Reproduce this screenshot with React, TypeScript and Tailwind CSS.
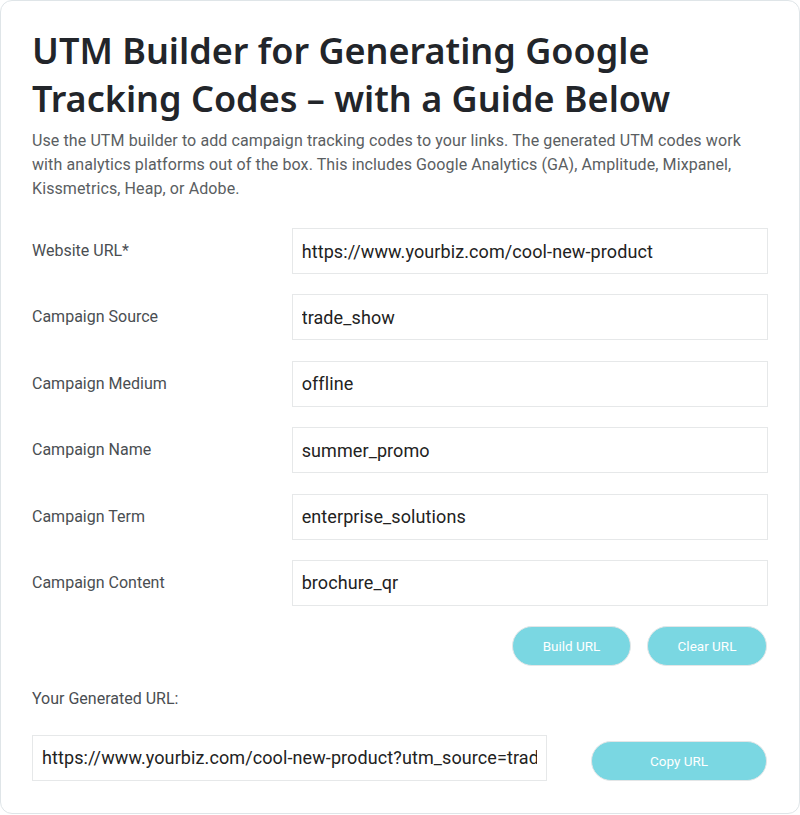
const fields = [
  { label: "Website URL*", value: "https://www.yourbiz.com/cool-new-product" },
  { label: "Campaign Source", value: "trade_show" },
  { label: "Campaign Medium", value: "offline" },
  { label: "Campaign Name", value: "summer_promo" },
  { label: "Campaign Term", value: "enterprise_solutions" },
  { label: "Campaign Content", value: "brochure_qr" },
];

const generated =
  "https://www.yourbiz.com/cool-new-product?utm_source=trade_show&utm_medium=offline&utm_campaign=summer_promo&utm_term=enterprise_solutions&utm_content=brochure_qr";

export default function App() {
  return (
    <div className="w-[800px] h-[815px] bg-white">
      <div className="w-[800px] h-[814px] rounded-xl border border-[#dfe5e8] bg-white px-[31px] pt-[26px] font-['Roboto',sans-serif]">
        <h1 className="font-['Noto_Sans',sans-serif] font-semibold text-[36px] leading-[48px] text-[#22252a]">
          UTM Builder for Generating Google Tracking Codes – with a Guide Below
        </h1>
        <p className="mt-[6px] text-[16px] leading-[24px] tracking-[0.1px] text-[#5a5e62] pr-4">
          Use the UTM builder to add campaign tracking codes to your links. The generated UTM codes work
          with analytics platforms out of the box. This includes Google Analytics (GA), Amplitude, Mixpanel,
          Kissmetrics, Heap, or Adobe.
        </p>

        <div className="mt-[27px] flex flex-col gap-[20.4px]">
          {fields.map((f) => (
            <div key={f.label} className="flex items-center">
              <label className="w-[260px] text-[16px] text-[#4a4e52]">{f.label}</label>
              <input
                readOnly
                value={f.value}
                className="h-[46px] w-[477px] border border-[#e6e8e9] bg-white px-[9px] text-[18px] tracking-[0.1px] text-[#222] outline-none"
              />
            </div>
          ))}
        </div>

        <div className="mt-[20px] flex justify-end gap-[16px] pr-[1px]">
          <button className="h-[40px] w-[119px] rounded-full border border-[#e3e6e7] bg-[#7ad7e2] text-[13.5px] text-white">
            Build URL
          </button>
          <button className="h-[40px] w-[120px] rounded-full border border-[#e3e6e7] bg-[#7ad7e2] text-[13.5px] text-white">
            Clear URL
          </button>
        </div>

        <div className="mt-[21px] text-[16px] text-[#4a4e52]">Your Generated URL:</div>

        <div className="mt-[24px] flex items-center justify-between pr-[1px]">
          <input
            readOnly
            value={generated}
            className="h-[46px] w-[515px] border border-[#e6e8e9] bg-white px-[9px] text-[18px] tracking-[0.1px] text-[#222] outline-none"
          />
          <button className="mt-[6px] h-[40px] w-[176px] rounded-full border border-[#e3e6e7] bg-[#7ad7e2] text-[13.5px] text-white">
            Copy URL
          </button>
        </div>
      </div>
    </div>
  );
}
